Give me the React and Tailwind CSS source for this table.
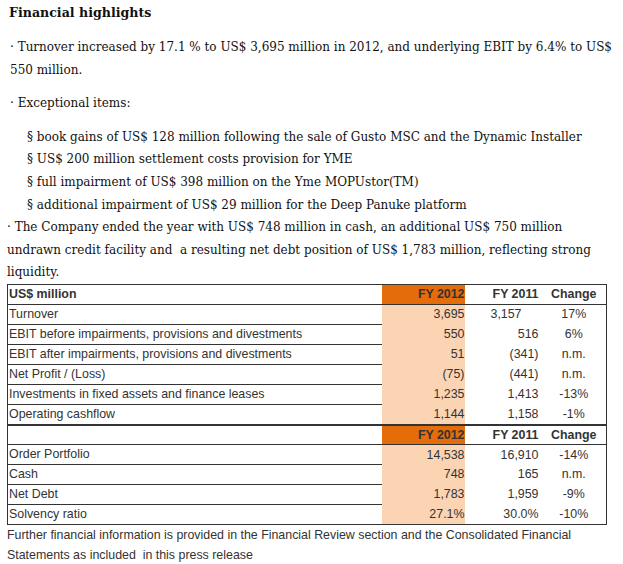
import React from 'react';

const serif = { fontFamily: '"DejaVu Serif", Georgia, serif' };

const sectionOne = [
  ['Turnover', '3,695', '3,157', '17%', true],
  ['EBIT before impairments, provisions and divestments', '550', '516', '6%'],
  ['EBIT after impairments, provisions and divestments', '51', '(341)', 'n.m.'],
  ['Net Profit / (Loss)', '(75)', '(441)', 'n.m.'],
  ['Investments in fixed assets and finance leases', '1,235', '1,413', '-13%'],
  ['Operating cashflow', '1,144', '1,158', '-1%'],
];

const sectionTwo = [
  ['Order Portfolio', '14,538', '16,910', '-14%'],
  ['Cash', '748', '165', 'n.m.'],
  ['Net Debt', '1,783', '1,959', '-9%'],
  ['Solvency ratio', '27.1%', '30.0%', '-10%'],
];

function HeaderRow({ label, thickTop }) {
  return (
    <tr className={`h-[20px] border-b border-[#333] ${thickTop ? 'border-t-2' : ''}`}>
      <td className="pl-px font-bold">{label}</td>
      <td className="bg-[#e46c0a] text-right font-bold">FY 2012</td>
      <td className="pr-[3px] text-right font-bold">FY 2011</td>
      <td className="text-center font-bold">Change</td>
    </tr>
  );
}

function DataRow({ row, last }) {
  const [label, fy12, fy11, change, leftAlign] = row;
  return (
    <tr className="h-[20px]">
      <td className={`pl-px ${last ? '' : 'border-b border-[#333]'}`}>{label}</td>
      <td className="bg-[#fbd4b4] text-right">{fy12}</td>
      <td className={leftAlign ? 'pl-[26px] text-left' : 'pr-[3px] text-right'}>{fy11}</td>
      <td className="text-center">{change}</td>
    </tr>
  );
}

export default function App() {
  return (
    <div className="w-[623px] h-[564px] bg-white text-[#111] overflow-hidden">
      <div style={serif} className="pl-[7px] pr-[6px]">
        <h2 className="pt-[4px] text-[12.6px] font-bold leading-[18px] pl-[2px]">Financial highlights</h2>
        <div className="text-[12px] leading-[22.6px]">
          <p className="mt-[14px] pl-[3px]">· Turnover increased by 17.1 % to US$ 3,695 million in 2012, and underlying EBIT by 6.4% to US$ 550 million.</p>
          <p className="mt-[11px] pl-[3px]">· Exceptional items:</p>
          <ul className="mt-[11px] pl-[20px]">
            <li>§ book gains of US$ 128 million following the sale of Gusto MSC and the Dynamic Installer</li>
            <li>§ US$ 200 million settlement costs provision for YME</li>
            <li>§ full impairment of US$ 398 million on the Yme MOPUstor(TM)</li>
            <li>§ additional impairment of US$ 29 million for the Deep Panuke platform</li>
          </ul>
          <p>· The Company ended the year with US$ 748 million in cash, an additional US$ 750 million undrawn credit facility and&nbsp; a resulting net debt position of US$ 1,783 million, reflecting strong liquidity.</p>
        </div>
      </div>

      <div className="pl-[7px]" style={{ fontFamily: '"Liberation Sans", Arial, sans-serif' }}>
        <table className="w-[600px] border-collapse border border-[#333] text-[12.4px] text-[#333] table-fixed">
          <colgroup>
            <col className="w-[374px]" />
            <col className="w-[83px]" />
            <col className="w-[77px]" />
            <col className="w-[65px]" />
          </colgroup>
          <tbody>
            <HeaderRow label="US$ million" />
            {sectionOne.map((row, i) => (
              <DataRow key={row[0]} row={row} last={i === sectionOne.length - 1} />
            ))}
            <HeaderRow label="" thickTop />
            {sectionTwo.map((row, i) => (
              <DataRow key={row[0]} row={row} last={i === sectionTwo.length - 1} />
            ))}
          </tbody>
        </table>
        <p className="text-[12.4px] leading-[20px] text-[#333] w-[590px]">
          Further financial information is provided in the Financial Review section and the Consolidated Financial Statements as included&nbsp; in this press release
        </p>
      </div>
    </div>
  );
}
